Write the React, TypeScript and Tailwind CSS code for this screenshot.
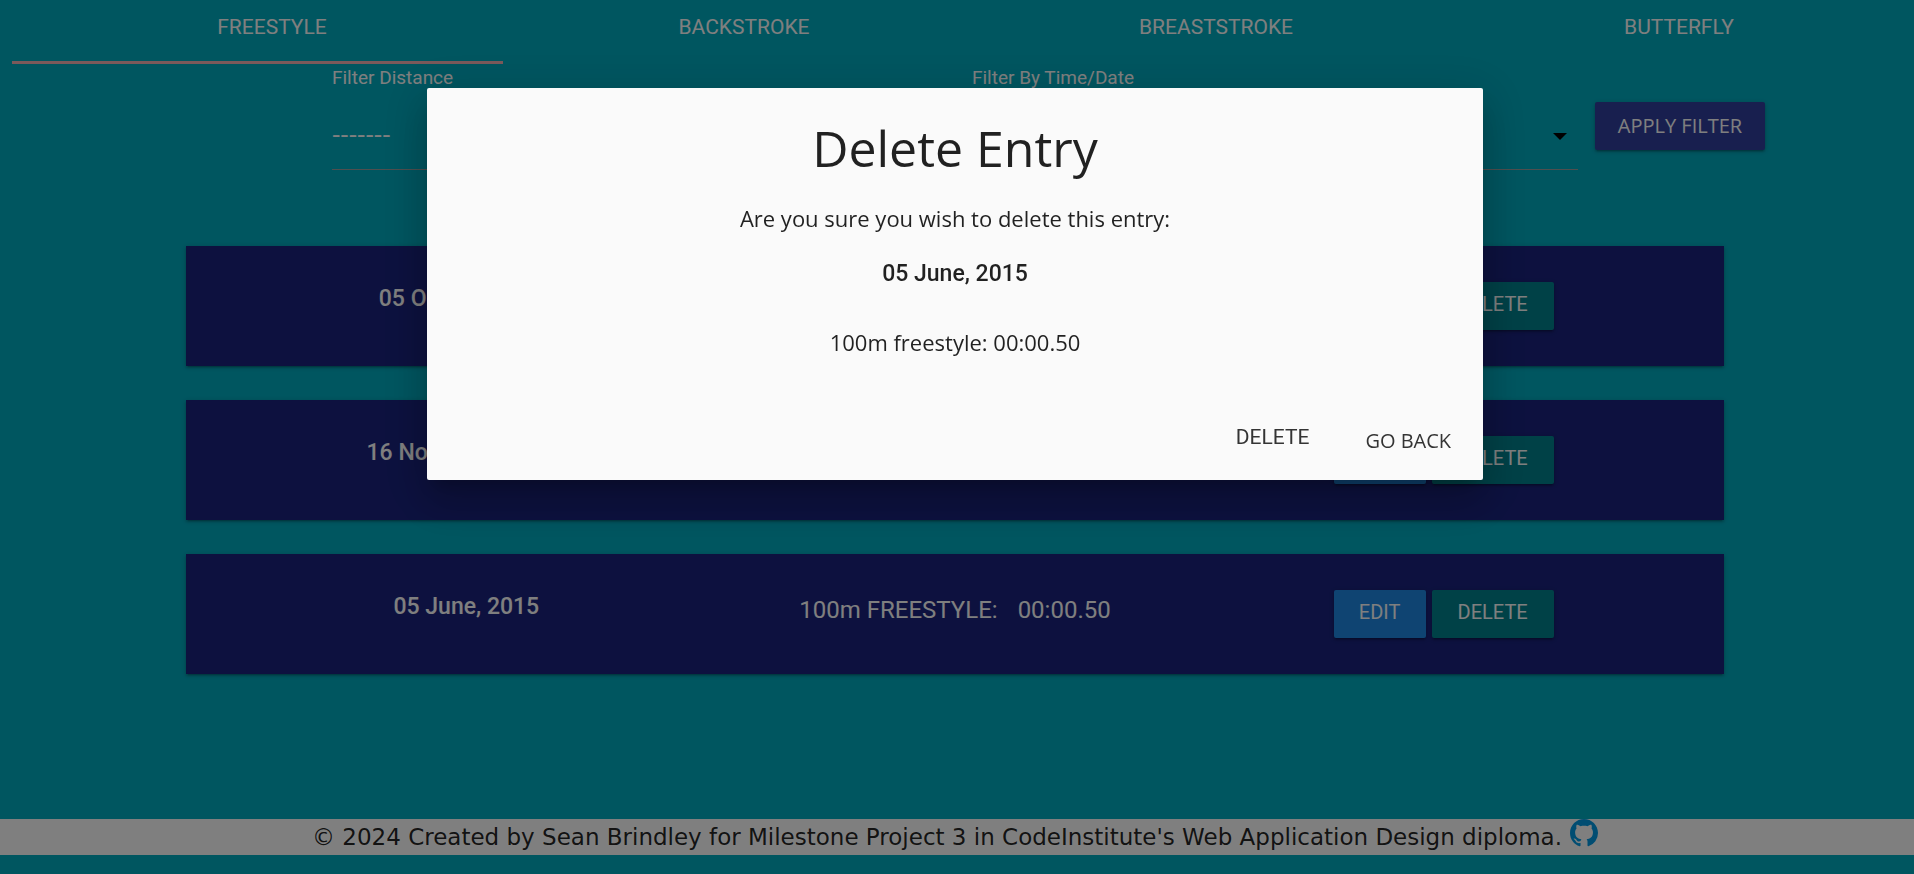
import { useState } from "react";

const strokes = ["FREESTYLE", "BACKSTROKE", "BREASTSTROKE", "BUTTERFLY"];

const entries = [
  { date: "05 October, 2023", event: "50m FREESTYLE:", time: "00:32.10" },
  { date: "16 November, 2022", event: "50m FREESTYLE:", time: "00:34.20" },
  { date: "05 June, 2015", event: "100m FREESTYLE:", time: "00:00.50" },
];

const raised =
  "shadow-[0_2px_2px_0_rgba(0,0,0,0.14),0_3px_1px_-2px_rgba(0,0,0,0.12),0_1px_5px_0_rgba(0,0,0,0.2)]";

function FilterSelect({ id, label, className }: { id: string; label: string; className: string }) {
  return (
    <div className={`flex flex-1 flex-col gap-2.5 ${className}`}>
      <label htmlFor={id} className="text-[19px] leading-7">
        {label}
      </label>
      <div className="relative">
        <select
          id={id}
          className="h-[68px] w-full appearance-none border-b border-[#9e9e9e] bg-transparent pb-1 font-['Open_Sans',sans-serif] text-[26px] outline-none"
        >
          <option>-------</option>
        </select>
        <svg
          viewBox="0 0 24 24"
          className="pointer-events-none absolute top-[22px] right-1.5 size-6 fill-black"
          aria-hidden="true"
        >
          <path d="M5 9l7 7 7-7z" />
        </svg>
      </div>
    </div>
  );
}

function EntryCard({ date, event, time }: { date: string; event: string; time: string }) {
  return (
    <article className={`grid grid-cols-3 items-center bg-[#1a237e] px-9 py-9 text-center ${raised}`}>
      <h2 className="pb-3.5 text-[23px] font-medium leading-7">{date}</h2>
      <p className="flex justify-center gap-5 pb-2 text-[24px] leading-8">
        <span>{event}</span>
        <span>{time}</span>
      </p>
      <div className="flex justify-center gap-1.5 text-[20px]">
        <button className={`h-12 w-23 rounded-xs bg-[#1e88e5] pb-1 ${raised}`}>EDIT</button>
        <button className={`h-12 w-[122px] rounded-xs bg-[#00838f] pb-1 ${raised}`}>DELETE</button>
      </div>
    </article>
  );
}

function GithubMark() {
  return (
    <svg viewBox="0 0 16 16" className="size-7 fill-[#039be5]" aria-hidden="true">
      <path d="M8 0C3.58 0 0 3.58 0 8c0 3.54 2.29 6.53 5.47 7.59.4.07.55-.17.55-.38 0-.19-.01-.82-.01-1.49-2.01.37-2.53-.49-2.69-.94-.09-.23-.48-.94-.82-1.13-.28-.15-.68-.52-.01-.53.63-.01 1.08.58 1.23.82.72 1.21 1.87.87 2.33.66.07-.52.28-.87.51-1.07-1.78-.2-3.64-.89-3.64-3.95 0-.87.31-1.59.82-2.15-.08-.2-.36-1.02.08-2.12 0 0 .67-.21 2.2.82.64-.18 1.32-.27 2-.27s1.36.09 2 .27c1.53-1.04 2.2-.82 2.2-.82.44 1.1.16 1.92.08 2.12.51.56.82 1.27.82 2.15 0 3.07-1.87 3.75-3.65 3.95.29.25.54.73.54 1.48 0 1.07-.01 1.93-.01 2.2 0 .21.15.46.55.38A8.01 8.01 0 0 0 16 8c0-4.42-3.58-8-8-8z" />
    </svg>
  );
}

function DeleteDialog({ onClose }: { onClose: () => void }) {
  return (
    <div className="fixed inset-0 flex items-start justify-center bg-black/50 pt-22 pr-1">
      <section
        role="dialog"
        aria-modal="true"
        aria-labelledby="dialog-title"
        className="w-[55.3%] rounded-xs bg-[#fafafa] text-center font-['Open_Sans',sans-serif] text-[22px] leading-8 text-black/87 shadow-[0_24px_38px_3px_rgba(0,0,0,0.14),0_9px_46px_8px_rgba(0,0,0,0.12),0_11px_15px_-7px_rgba(0,0,0,0.2)]"
      >
        <h1 id="dialog-title" className="pt-[30px] text-[50px] leading-[60px]">
          Delete Entry
        </h1>
        <p className="pt-6">Are you sure you wish to delete this entry:</p>
        <p className="pt-6 font-['Roboto',sans-serif] text-[23px] font-medium">05 June, 2015</p>
        <p className="pt-9">100m freestyle: 00:00.50</p>
        <div className="flex items-start justify-end gap-6 px-4 pt-[59px] pb-[19px] text-[20px] leading-10 text-[#343434]">
          <button className="px-4 font-['Roboto',sans-serif] text-[21px]" onClick={onClose}>
            DELETE
          </button>
          <button className="px-4 pt-1" onClick={onClose}>
            GO BACK
          </button>
        </div>
      </section>
    </div>
  );
}

export default function App() {
  const [open, setOpen] = useState(true);

  return (
    <div className="flex min-h-screen flex-col bg-[#00acc1] font-['Roboto',sans-serif] text-white">
      <nav>
        <ul className="grid grid-cols-[471fr_471fr_471fr_453fr] pr-2 pl-9 text-center">
          {strokes.map((stroke) => (
            <li key={stroke} className="h-[61px] text-[21px] leading-[54px]">
              <a href={`#${stroke.toLowerCase()}`}>{stroke}</a>
            </li>
          ))}
        </ul>
        <div className="mx-3">
          <div className="h-[3px] w-[26%] bg-[#f6b2b5]" />
        </div>
      </nav>

      <form className="flex items-start pr-[149px] pl-[332px]" onSubmit={(e) => e.preventDefault()}>
        <FilterSelect id="distance" label="Filter Distance" className="mr-[34px]" />
        <FilterSelect id="order" label="Filter By Time/Date" className="mr-[17px]" />
        <button
          className={`mt-[38px] h-12 w-[170px] rounded-xs bg-[#303f9f] font-['Open_Sans',sans-serif] text-[20px] ${raised}`}
        >
          APPLY FILTER
        </button>
      </form>

      <main className="flex flex-1 flex-col gap-[34px] pt-19 pr-[190px] pb-9 pl-[186px]">
        {entries.map((entry) => (
          <EntryCard key={entry.date} {...entry} />
        ))}
      </main>

      <footer className="mb-[19px] flex h-9 justify-center gap-2 bg-white pr-1 font-['DejaVu_Sans',sans-serif] text-[23px] leading-9 text-black/87">
        <p>
          © 2024 Created by Sean Brindley for Milestone Project 3 in CodeInstitute's Web Application Design diploma.
        </p>
        <a href="#github" aria-label="GitHub" className="size-7">
          <GithubMark />
        </a>
      </footer>

      {open && <DeleteDialog onClose={() => setOpen(false)} />}
    </div>
  );
}
